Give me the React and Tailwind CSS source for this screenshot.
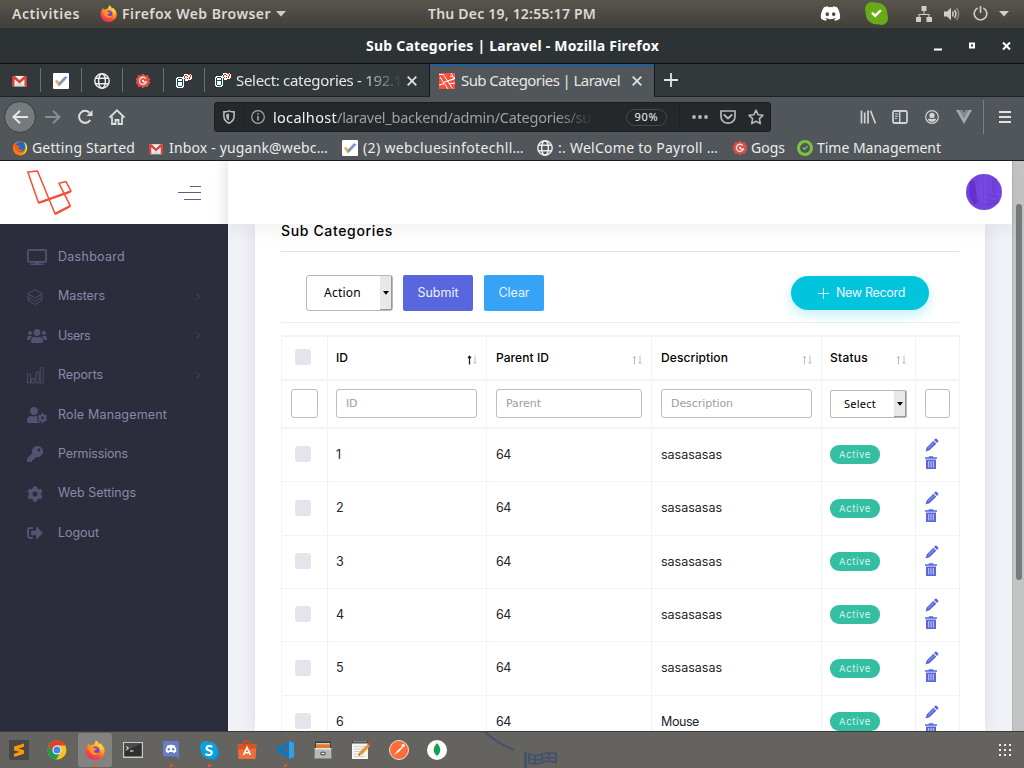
import React, { useLayoutEffect, useRef } from "react";
import { FaUsers, FaKey, FaCog, FaUserCog, FaSignOutAlt, FaDiscord } from "react-icons/fa";

/* Text run whose letter spacing is adjusted so that it spans `w` pixels. */
function Fit({ w, className = "", children }) {
  const ref = useRef(null);
  useLayoutEffect(() => {
    const el = ref.current;
    el.style.letterSpacing = "0px";
    const natural = el.getBoundingClientRect().width;
    el.style.letterSpacing = (w - natural) / children.length + "px";
  }, [w, children]);
  return (
    <span ref={ref} className={"inline-block shrink-0 whitespace-pre " + className}>
      {children}
    </span>
  );
}

const ubuntu = "font-['Noto_Sans',sans-serif]";
const poppins = "font-['Inter',sans-serif]";

function FirefoxIcon({ className = "" }) {
  return (
    <svg viewBox="0 0 20 20" className={"shrink-0 " + className}>
      <defs>
        <linearGradient id="ffx" x1="0.8" y1="0" x2="0.25" y2="1">
          <stop offset="0" stopColor="#fff04a" />
          <stop offset="0.4" stopColor="#ffa21e" />
          <stop offset="0.7" stopColor="#ff4a3a" />
          <stop offset="1" stopColor="#e62a7c" />
        </linearGradient>
      </defs>
      <path d="M2.200 6.200 3.400 3.600l1.400 2 2-1.200.2 1C8.500 5 10 3.500 10.800.4c2 1.200 3.200 2.700 3.500 4.400l.8-1.500c3 2 4.700 5 4.500 8.200-.4 5-4.600 8.500-9.600 8.500S.6 16.200.6 11c0-1.900.5-3.600 1.600-4.800z" fill="url(#ffx)" />
      <circle cx="10.400" cy="10.700" r="4.300" fill="#7a3fd6" />
      <path d="M3.500 7c2-1 4.600-.6 6 1.200l2.600.5c-.4 1.300-2 1.300-2.800 1.700-.5.800-.2 2 1.300 2.400 1.500.4 2.800-.4 3.800 0-1 1.800-4.200 3-6.800 1.600C5 13 3.500 10 3.500 7z" fill="#ff9420" />
      <path d="M12 4.500c2.800 1.500 4.300 4 3.800 7.500 2-3 1.500-6.500-.7-8.700l-.8 1.500z" fill="#ffd234" />
    </svg>
  );
}

function OldFirefoxIcon() {
  return (
    <svg viewBox="0 0 16 16" className="size-[16px] shrink-0">
      <circle cx="8" cy="8.300" r="7.100" fill="#ff7a12" />
      <circle cx="8.500" cy="6.600" r="5.200" fill="#1b6ad1" />
      <path d="M1 4c1.600.200 3 .200 4.300 1.400L8 6 6.600 8c.4 1.800 2.200 2 4 1.200-.3 2-3 3-5 2C3 10 2 8 2 6z" fill="#ff5a0c" />
      <path d="M12 2c2.500 1.500 3.500 4 3.200 6.500-.6 4-4 6.800-7.700 6.800 4-1 6.500-4 6-8C13.300 5.500 12.600 4 12 2z" fill="#ffd62e" />
    </svg>
  );
}

function Gmail({ className }) {
  return (
    <svg viewBox="0 0 16 13" className={"shrink-0 " + className}>
      <rect x="1" y="1" width="14" height="11.500" fill="#efefef" />
      <path d="m3 12 5-5 5 5z" fill="#d9d9d9" />
      <path d="M1 1h2l5 4.800L13 1h2a1 1 0 0 1 1 1v10.500h-2.600V4.600L8 9.200 2.600 4.600v7.900H0V2a1 1 0 0 1 1-1z" fill="#db4437" />
    </svg>
  );
}

function TickDoc() {
  return (
    <svg viewBox="0 0 16 16" className="size-[16px] shrink-0">
      <rect width="16" height="16" rx="1" fill="#fff" />
      <path d="m1.800 8.300 2-1.600 2.800 2.600-1 3.700z" fill="#f3a96a" />
      <path d="m5.800 9.800 6.200-6.600 2.600 1L6.600 13z" fill="#6d97d8" />
      <path d="M4.800 11.200 7 9.400l.8 1.800L6.200 13z" fill="#72b86a" />
      <path d="m8.200 7.200 1.300-1.400 1.800 1.800-1.600 1.800z" fill="#b88aa8" />
    </svg>
  );
}

function Globe() {
  return (
    <svg viewBox="0 0 16 16" className="size-[16px] shrink-0" fill="none" stroke="#ececec" strokeWidth="1.500">
      <circle cx="8" cy="8" r="7.200" />
      <ellipse cx="8" cy="8" rx="3.400" ry="7.200" />
      <path d="M1.500 5.300h13M1.500 10.700h13" />
    </svg>
  );
}

function Gogs() {
  return (
    <svg viewBox="0 0 16 16" className="size-[16px] shrink-0">
      <path d="m8 .5 2.200 2 2.800-.6.6 2.900 1.900 1.200L14.300 8l1.200 2-1.900 1.300-.6 2.800-2.800-.6L8 15.500l-2.200-2-2.800.6-.6-2.800L.5 10 1.700 8 .5 6l1.900-1.200L3 1.900l2.800.6z" fill="#dc5046" />
      <path d="M10.800 5.600A3.600 3.600 0 1 0 11.400 9H8.200" fill="none" stroke="#f6dedc" strokeWidth="1.300" />
      <circle cx="8" cy="7.800" r="1" fill="#fff" />
    </svg>
  );
}

function Adminer() {
  return (
    <svg viewBox="0 0 16 16" className="size-[16px] shrink-0" shapeRendering="crispEdges">
      <path d="M1 4h6v1h1v9H7v1H1v-1H0V5h1zM8 1h7v1h1v4h-1v1h-3v1H9V6H7V3h1z" fill="#fff" />
      <path d="M2 5h4v1H2zM1 6h1v7H1zM6 6h1v7H6zM2 8h4v1H2zM2 13h4v1H2z" fill="#0d4a5c" />
      <path d="M9 2h2v1H9zM12 1h2v1h-2zM8 3h1v2H8zM11 3h1v1h-1zM14 2h1v2h-1zM9 5h1v1H9zM11 5h1v1h-1zM13 4h1v2h-1z" fill="#e8231c" />
    </svg>
  );
}

function CloseX() {
  return (
    <svg viewBox="0 0 10 10" className="size-[10px] shrink-0" stroke="#e4e4e4" strokeWidth="1.700">
      <path d="m.7.7 8.600 8.600M9.300.7.7 9.300" />
    </svg>
  );
}

function TopBar() {
  return (
    <div className={"flex h-[28px] shrink-0 items-center bg-gradient-to-b from-[#58554d] to-[#413f39] pb-px text-[14px] leading-none font-semibold text-[#dcdad5] " + ubuntu}>
      <Fit w={68} className="ml-[12px]">Activities</Fit>
      <FirefoxIcon className="ml-[20px] size-[17px]" />
      <Fit w={149} className="ml-[5px]">Firefox Web Browser</Fit>
      <svg viewBox="0 0 10 6" className="ml-[5px] h-[6px] w-[10px]"><path d="M0 0h10L5 5.500z" fill="#d0cec8" /></svg>
      <Fit w={168} className="ml-[142px]">Thu Dec 19, 12:55:17 PM</Fit>
      <FaDiscord className="ml-[224px] size-[21px] shrink-0 text-white" />
      <svg viewBox="0 0 22 22" className="ml-[24px] size-[23px] shrink-0">
        <path d="M0 6.500A6.500 6.500 0 0 1 6.500 0c2 0 2.600.8 4.500.8 6 0 10.500 4.600 10.300 10.300.3 1.400.7 3 .7 4.400a6.500 6.500 0 0 1-6.500 6.500c-1.500 0-3-.6-4.300-.6C5.500 21.400.700 17 .7 11 .7 9.400 0 8.500 0 6.500z" fill="#68ab18" />
        <path d="m7.300 10.800 2.500 2.400 4.700-4.700" fill="none" stroke="#fff" strokeWidth="2.300" strokeLinecap="round" />
      </svg>
      <svg viewBox="0 0 16 16" className="ml-[28px] size-[16px] shrink-0" fill="#d0cec8">
        <path d="M5.500 0h5v5h-5zM0 11h5v5H0zM10.500 11H16v5h-5.500zM7.500 5h1v3h5v3h-1V9h-9v2h-1V8h5z" />
      </svg>
      <svg viewBox="0 0 16 14" className="ml-[12px] h-[14px] w-[16px] shrink-0" fill="none" stroke="#d0cec8" strokeWidth="1.500">
        <path d="M0 4.500h3L7 .8v12.400L3 9.500H0z" fill="#d0cec8" stroke="none" />
        <path d="M8.500 4.500q1.500 2.500 0 5" />
        <path d="M10.500 2.800q2.800 4.200 0 8.400" />
        <path d="M12.700 1q3.800 6 0 12" stroke="#8b8982" />
      </svg>
      <svg viewBox="0 0 16 16" className="ml-[13px] size-[15px] shrink-0" fill="none" stroke="#d0cec8" strokeWidth="1.700">
        <path d="M5 2.200a6.700 6.700 0 1 0 6 0M8 0v7.500" />
      </svg>
      <svg viewBox="0 0 10 6" className="ml-[11px] h-[6px] w-[10px] shrink-0"><path d="M0 0h10L5 5.500z" fill="#d0cec8" /></svg>
    </div>
  );
}

function TitleBar() {
  return (
    <div className={"flex h-[36px] shrink-0 items-center border-b border-[#0e1011] bg-[#2d3235] text-[14px] leading-none font-bold text-white " + ubuntu}>
      <Fit w={293} className="ml-[366px]">Sub Categories | Laravel - Mozilla Firefox</Fit>
      <svg viewBox="0 0 80 12" className="ml-[274px] h-[12px] w-[80px] shrink-0" fill="none" stroke="#fff" strokeWidth="2">
        <path d="M1 9.500h8" />
        <path d="M37 4h4v4h-4z" transform="translate(0 -.500)" />
        <path d="m70 2.500 7 7M77 2.500l-7 7" />
      </svg>
    </div>
  );
}

function PinnedTab({ children }) {
  return (
    <div className="flex w-[41px] shrink-0 items-center justify-center pr-[2px] pt-px">
      {children}
    </div>
  );
}

function TabBar() {
  const sep = <div className="-ml-px h-[24px] w-px shrink-0 self-center bg-[#6b7073]" />;
  return (
    <div className={"flex h-[33px] shrink-0 border-b border-[#1f2224] bg-[#33383b] text-[15px] leading-none text-[#e6e6e6] " + ubuntu}>
      <PinnedTab><Gmail className="h-[12px] w-[15px]" /></PinnedTab>{sep}
      <PinnedTab><TickDoc /></PinnedTab>{sep}
      <PinnedTab><Globe /></PinnedTab>{sep}
      <PinnedTab><Gogs /></PinnedTab>{sep}
      <PinnedTab><Adminer /></PinnedTab>{sep}
      <div className="flex w-[225px] shrink-0 items-center border-r border-[#16191a] pl-[10px]">
        <Adminer />
        <div className="ml-[5px] flex h-full w-[166px] items-center overflow-hidden [mask-image:linear-gradient(to_right,black_125px,transparent_166px)]">
          <Fit w={166}>Select: categories - 192.1</Fit>
        </div>
        <div className="mt-px ml-[5px]"><CloseX /></div>
      </div>
      <div className="-mb-px flex w-[224px] shrink-0 items-center border-t-2 border-[#215d9c] bg-[#50565a] pb-[2px] pl-[9px]">
        <svg viewBox="0 0 16 16" className="mt-px size-[16px] shrink-0">
          <rect width="16" height="16" fill="#fb503b" />
          <path d="M0 1.500h4.500L8.500 8l7.500-2.500M1 4l3.500 5.500L16 5.500M0 12l5.500-1.500 3.500 5.500M8.500 8l5 7.500M11 3l5 1.500M12 0l2 3M10 11l6-1" fill="none" stroke="#fff" strokeWidth="1" />
        </svg>
        <Fit w={159} className="ml-[6px]">Sub Categories | Laravel</Fit>
        <div className="mt-px ml-[12px]"><CloseX /></div>
      </div>
      <div className="flex items-center border-l border-[#16191a] pl-[9px]">
        <svg viewBox="0 0 14 14" className="size-[14px]" stroke="#e4e4e4" strokeWidth="1.800"><path d="M7 0v14M0 7h14" /></svg>
      </div>
    </div>
  );
}

function NavBar() {
  return (
    <div className={"flex h-[40px] shrink-0 items-center bg-[#50565a] text-[14.500px] leading-none text-[#9da0a2] " + ubuntu}>
      <div className="ml-[4px] flex size-[32px] shrink-0 items-center justify-center rounded-full border border-[#383d40] bg-[#767b7d]">
        <svg viewBox="0 0 16 14" className="h-[14px] w-[16px]" fill="none" stroke="#e6e6e6" strokeWidth="2"><path d="M16 7H1.500M8 .8 1.500 7 8 13.200" /></svg>
      </div>
      <svg viewBox="0 0 16 14" className="ml-[9px] h-[14px] w-[16px] shrink-0" fill="none" stroke="#888d8f" strokeWidth="2"><path d="M0 7h14.500M8 .8 14.500 7 8 13.200" /></svg>
      <svg viewBox="0 0 16 16" className="ml-[16px] size-[16px] shrink-0" fill="none" stroke="#dcdedf" strokeWidth="2">
        <path d="M13.200 11a6 6 0 1 1-.7-7.200" /><path d="M15.500 1v6h-6z" fill="#dcdedf" stroke="none" />
      </svg>
      <svg viewBox="0 0 16 16" className="ml-[16px] size-[16px] shrink-0" fill="none" stroke="#dcdedf" strokeWidth="1.800">
        <path d="M.5 8.500 8 1.300l7.500 7.200" /><path d="M3 7.500v7.500h3.500v-4h3v4H13V7.500" />
      </svg>
      <div className="ml-[89px] flex h-[30px] w-[557px] shrink-0 items-center rounded-[3px] border border-[#1b1e20] bg-[#25282b]">
        <svg viewBox="0 0 12 14" className="ml-[8px] h-[14px] w-[12px] shrink-0" fill="none" stroke="#b6b8b9" strokeWidth="1.600">
          <path d="M.9 1.800Q3.700 2 6 .9 8.300 2 11.100 1.800V6c0 4-2.500 6-5.100 7.200C3.400 12 .9 10 .9 6z" /><path d="M6 3.500v7c-2-1-2.800-2.500-2.800-4.500V4.200z" fill="#b6b8b9" stroke="none" />
        </svg>
        <div className="ml-[8px] h-[22px] w-px bg-[#1c1f21]" />
        <svg viewBox="0 0 14 14" className="ml-[7px] size-[14px] shrink-0" fill="none" stroke="#a4a7a9" strokeWidth="1.200"><circle cx="7" cy="7" r="6.300" /><path d="M7 6v4.500M7 3.300v1.500" strokeWidth="1.600" /></svg>
        <div className="ml-[8px] flex h-full w-[320px] items-center overflow-hidden [mask-image:linear-gradient(to_right,black_285px,transparent_320px)]">
          <Fit w={64} className="text-[#f2f2f2]">localhost</Fit>
          <Fit w={254}>/laravel_backend/admin/Categories/su</Fit>
        </div>
        <div className="ml-[33px] flex h-[17px] w-[41px] shrink-0 items-center justify-center rounded-full border border-[#45494c] pb-px text-[11px] text-[#eee]"><Fit w={24}>90%</Fit></div>
        <div className="ml-[12px] h-[22px] w-px bg-[#1c1f21]" />
        <svg viewBox="0 0 16 4" className="ml-[12px] h-[4px] w-[16px] shrink-0" fill="#b6b8b9"><circle cx="2" cy="2" r="1.900" /><circle cx="8" cy="2" r="1.900" /><circle cx="14" cy="2" r="1.900" /></svg>
        <svg viewBox="0 0 16 14" className="ml-[12px] h-[14px] w-[16px] shrink-0" fill="none" stroke="#b6b8b9" strokeWidth="1.700">
          <path d="M1 1h14v5.500c0 4-3.200 6.600-7 6.600s-7-2.600-7-6.600z" /><path d="M4.300 5 8 8.500 11.700 5" strokeWidth="1.900" strokeLinecap="round" />
        </svg>
        <svg viewBox="0 0 16 16" className="ml-[12px] size-[16px] shrink-0" fill="none" stroke="#b6b8b9" strokeWidth="1.600" strokeLinejoin="round">
          <path d="m8 1.200 2.100 4.500 4.900.6-3.600 3.400.9 4.900L8 12.200l-4.300 2.400.9-4.900L1 6.300l4.900-.6z" />
        </svg>
      </div>
      <svg viewBox="0 0 16 14" className="ml-[89px] h-[14px] w-[16px] shrink-0" stroke="#d0d2d3" strokeWidth="1.700"><path d="M1.500 .5v13M4.700 2.500v11M8 .5v13M10.500 .8l5 12.700" /></svg>
      <svg viewBox="0 0 16 14" className="ml-[16px] h-[14px] w-[16px] shrink-0" fill="none" stroke="#d0d2d3"><rect x="1" y="1" width="14" height="12" rx="1.500" strokeWidth="1.800" /><path d="M7.700 1v12" strokeWidth="1.500" /><path d="M3 4h3M3 6.300h3M3 8.500h2" strokeWidth="1.100" /></svg>
      <svg viewBox="0 0 14 14" className="ml-[17px] size-[14px] shrink-0"><circle cx="7" cy="7" r="6.300" fill="none" stroke="#d0d2d3" strokeWidth="1.200" /><circle cx="7" cy="5.400" r="2.700" fill="#d0d2d3" /><path d="M2.800 9.300c1.300-1 2-.9 2.700-.5.800.4 2.200.4 3 0 .7-.4 1.400-.5 2.700.5C10.300 11.200 8.800 12 7 12s-3.300-.8-4.200-2.700z" fill="#d0d2d3" /></svg>
      <svg viewBox="0 0 16 14" className="ml-[17px] h-[14px] w-[16px] shrink-0"><path d="M0 0h3.500L8 8l4.500-8H16L8 14z" fill="#a6a9ab" /><path d="M3.500 0h3L8 2.800 9.500 0h3L8 8z" fill="#858a8c" /></svg>
      <div className="ml-[11px] h-[34px] w-px shrink-0 bg-[#7b8082]" />
      <svg viewBox="0 0 12 12" className="ml-[15px] size-[12px] shrink-0" stroke="#e2e2e2" strokeWidth="2"><path d="M0 1h12M0 6h12M0 11h12" /></svg>
    </div>
  );
}

function Bookmarks() {
  return (
    <div className={"flex h-[24px] shrink-0 items-center border-b border-[#17191a] bg-[#50565a] pb-px pl-[12px] text-[14px] leading-none text-[#ececec] " + ubuntu}>
      <OldFirefoxIcon />
      <Fit w={103} className="ml-[4px]">Getting Started</Fit>
      <Gmail className="mt-px ml-[14px] h-[12px] w-[14px]" />
      <Fit w={159} className="ml-[6px]">Inbox - yugank@webc…</Fit>
      <div className="ml-[14px]"><TickDoc /></div>
      <Fit w={161} className="ml-[5px]">(2) webcluesinfotechll…</Fit>
      <div className="ml-[13px]"><Globe /></div>
      <Fit w={160} className="ml-[5px]">:. WelCome to Payroll …</Fit>
      <div className="ml-[14px]"><Gogs /></div>
      <Fit w={34} className="ml-[3px]">Gogs</Fit>
      <svg viewBox="0 0 16 16" className="ml-[12px] size-[16px] shrink-0" fill="none"><circle cx="8" cy="8" r="6.500" stroke="#7cc242" strokeWidth="3" /><path d="m5.700 7.600 1.800 1.600 3-2.900" stroke="#7cc242" strokeWidth="1.400" /></svg>
      <Fit w={124} className="ml-[4px]">Time Management</Fit>
    </div>
  );
}

const MonitorIcon = () => (
  <svg viewBox="0 0 20 16" className="h-[16px] w-[20px]" fill="none" stroke="#505472" strokeWidth="1.800"><rect x=".9" y=".9" width="18.200" height="12" rx="1.200" /><path d="M3.500 15.200h13M8 14h4" strokeWidth="1.600" /></svg>
);
const LayersIcon = () => (
  <svg viewBox="0 0 16 16" className="size-[16px]" fill="none" stroke="#505472" strokeWidth=".8"><path d="m.5 4.800 7.500-4.300 7.500 4.300L8 9z" /><path d="m2.800 6.300-2.300 1.500L8 12.200l7.500-4.400-2.300-1.500M2.800 9.600.5 11 8 15.500l7.500-4.500-2.300-1.400" /></svg>
);
const BarsIcon = () => (
  <svg viewBox="0 0 17 17" className="size-[17px]" fill="none" stroke="#505472" strokeWidth=".8"><path d="M.5 7h3v9h-3zM4.700 11.500h3V16h-3zM9 5h3v11H9zM13.200.8h3V16h-3z" /></svg>
);

const menu = [
  { label: "Dashboard", w: 67, icon: <MonitorIcon /> },
  { label: "Masters", w: 47, icon: <LayersIcon />, more: true },
  { label: "Users", w: 32, icon: <FaUsers className="size-[20px]" />, more: true },
  { label: "Reports", w: 45, icon: <BarsIcon />, more: true },
  { label: "Role Management", w: 109, icon: <FaUserCog className="size-[20px]" /> },
  { label: "Permissions", w: 70, icon: <FaKey className="size-[16px]" /> },
  { label: "Web Settings", w: 78, icon: <FaCog className="size-[16px]" /> },
  { label: "Logout", w: 41, icon: <FaSignOutAlt className="size-[16px]" /> },
];

function Sidebar() {
  return (
    <aside className="flex w-[228px] shrink-0 flex-col bg-[#2c2d3c]">
      <div className="flex h-[63px] shrink-0 items-start bg-white bg-gradient-to-r from-white from-95% to-[#f3f3f4]">
        <svg viewBox="0 0 46 46" className="mt-[9px] ml-[27px] size-[46px] shrink-0" fill="none" stroke="#fb4b36" strokeWidth="1.500" strokeLinejoin="round">
          <path d="M.8 2 10.500 1 28 43.800 43.300 35.800 32 13.300l7-1.700 5 9.500L11.500 32.800z" />
          <path d="m12 32.800 31.500-11.200M28 44l15-7.700" strokeWidth="2.200" />
        </svg>
        <svg viewBox="0 0 23 15" className="mt-[24px] ml-[105px] h-[15px] w-[23px] shrink-0" stroke="#5a5e80" strokeWidth="1"><path d="M12 1.500h11M0 7.500h23M6 14.500h17" /></svg>
      </div>
      <nav className={"flex flex-col pt-[13.500px] text-[12.500px] leading-none text-[#868aa8] " + poppins}>
        {menu.map((m) => (
          <div key={m.label} className="flex h-[39.400px] items-center pl-[27px]">
            <span className="flex w-[31px] shrink-0 text-[#505472]">{m.icon}</span>
            <Fit w={m.w}>{m.label}</Fit>
            {m.more && (
              <svg viewBox="0 0 4 8" className="mr-[28px] ml-auto h-[7px] w-[4px]" fill="none" stroke="#505472" strokeWidth=".9"><path d="m.5.5 3 3.500-3 3.500" /></svg>
            )}
          </div>
        ))}
      </nav>
    </aside>
  );
}

function SortArrows({ active }) {
  return (
    <svg viewBox="0 0 10 10" className="h-[10px] w-[10px] shrink-0" fill="none" strokeWidth="1">
      <path d="M2.500 9.500V1.500M1 3 2.500 1.300 4 3" stroke={active ? "#222" : "#bcbec6"} strokeWidth={active ? 1.300 : 1} />
      <path d="M8 .5v8M6.500 7 8 8.700 9.500 7" stroke="#bcbec6" />
    </svg>
  );
}

const cols = "grid grid-cols-[46px_159px_165px_170px_94px_44px]";
const cell = "border-r border-[#f2f3f8]";

function HeadCell({ label, w, active, pad = "pl-[8px]" }) {
  return (
    <div className={"flex items-center justify-between pr-[9px] " + pad + " " + cell}>
      <Fit w={w}>{label}</Fit>
      <div className="mt-[4px]"><SortArrows active={active} /></div>
    </div>
  );
}

const Check = () => <div className="size-[16px] rounded-[3px] bg-[#e2e5ec]" />;

function FilterInput({ label, w, pad = "pl-[9px]" }) {
  return (
    <div className={"pt-[8px] pr-[9px] " + pad + " " + cell}>
      <div className="flex h-[29px] items-center rounded-[3px] border border-[#bdbdbd] bg-white pl-[9px]">
        {label && <Fit w={w}>{label}</Fit>}
      </div>
    </div>
  );
}

function SelectArrow() {
  return (
    <div className="ml-auto flex h-full w-[12px] shrink-0 items-center justify-center border-r border-b border-[#9a9a9a] bg-[#e8e8e7]">
      <svg viewBox="0 0 6 4" className="h-[4px] w-[6px]"><path d="M0 0h6L3 3.800z" /></svg>
    </div>
  );
}

const rows = [
  { id: "1", name: "sasasasas", w: 61, h: "h-[53px]", check: "pt-[17px]" },
  { id: "2", name: "sasasasas", w: 61, h: "h-[54px]", check: "pt-[18px]" },
  { id: "3", name: "sasasasas", w: 61, h: "h-[53px]", check: "pt-[17px]" },
  { id: "4", name: "sasasasas", w: 61, h: "h-[53px]", check: "pt-[17px]" },
  { id: "5", name: "sasasasas", w: 61, h: "h-[54px]", check: "pt-[18px]" },
  { id: "6", name: "Mouse", w: 38, h: "h-[53px]", check: "pt-[17px]" },
];

function Row({ r }) {
  return (
    <div className={cols + " shrink-0 border-b border-[#f2f3f8] text-[12.500px] leading-none text-[#212529] " + r.h}>
      <div className={"pl-[13px] " + r.check + " " + cell}><Check /></div>
      <div className={"flex items-center pl-[8px] " + cell}><Fit w={r.id === "1" ? 5 : 7}>{r.id}</Fit></div>
      <div className={"flex items-center pl-[9px] " + cell}><Fit w={15}>64</Fit></div>
      <div className={"flex items-center pl-[9px] " + cell}><Fit w={r.w}>{r.name}</Fit></div>
      <div className={"flex items-center pb-px pl-[8px] " + cell}>
        <div className="flex h-[19px] w-[50px] items-center justify-center rounded-[9px] bg-[#34bfa3] pt-px text-[9.500px] text-[#d2f3eb]"><Fit w={32}>Active</Fit></div>
      </div>
      <div className={"flex flex-col gap-[4px] pt-[9px] pl-[9px] " + cell}>
        <svg viewBox="0 0 14 14" className="size-[14px] shrink-0" fill="#5867dd"><path d="M10.200.8a1 1 0 0 1 1.400 0l1.600 1.600a1 1 0 0 1 0 1.400L12 5 9 2zM8.300 2.700l3 3-6.800 6.500L.5 13.500 1.700 9.500z" /><path d="m3.200 10.300 6-5.800" stroke="#b9bff2" strokeWidth=".7" /></svg>
        <svg viewBox="0 0 12 13" className="h-[13px] w-[12px] shrink-0" fill="#5867dd"><path d="M0 1.300h3.500L4 .3h4l.5 1H12v1.500H0zM1 3.500h10V13H1z" /><path d="M3.700 5v6.500M6 5v6.500M8.300 5v6.500" stroke="#d5d9f8" strokeWidth=".9" /></svg>
      </div>
    </div>
  );
}

function Page() {
  return (
    <main className={"flex min-w-0 flex-1 flex-col bg-[#f1f2f7] " + poppins}>
      <header className="relative z-10 flex h-[63px] shrink-0 items-center justify-end bg-white pr-[10px] pb-[2px] shadow-[0_5px_18px_rgba(69,65,78,0.08)]">
        <svg viewBox="0 0 36 36" className="size-[36px]">
          <defs><clipPath id="avatar"><circle cx="18" cy="18" r="18" /></clipPath></defs>
          <g clipPath="url(#avatar)">
            <rect width="36" height="36" fill="#7444de" />
            <path d="M4 8 8.500 6.500l3 21.500-3 3L3 22z" fill="#6432c8" />
            <path d="M15 4v24M19 0v30" stroke="#7a4ee2" strokeWidth="1.200" />
            <path d="M27 4v12q0 3 2 2l1-6V4M23 21l8 2v5l-8-2zM20 31l14-3" fill="none" stroke="#6b3cd2" strokeWidth="1.300" />
          </g>
        </svg>
      </header>
      <section className="mx-[27px] flex min-h-0 flex-1 flex-col bg-white px-[26px] shadow-[0_0_15px_rgba(69,65,78,0.12)]">
        <div className="flex h-[28px] shrink-0 items-start border-b border-[#e2e3e8] text-[14px] leading-[13px] font-medium text-black">
          <Fit w={112}>Sub Categories</Fit>
        </div>
        <div className="flex h-[71px] shrink-0 items-start border-b border-[#ebedf2] pt-[23px] pr-[30px] pl-[25px] text-[12.500px] leading-none text-[#f0f1fd]">
          <div className="flex h-[36px] w-[87px] items-center rounded-[3px] border border-[#b7b7b7] pl-[17px] font-['Noto_Sans',sans-serif] text-[12px] text-black"><Fit w={37}>Action</Fit><SelectArrow /></div>
          <div className="ml-[10px] flex h-[36px] w-[70px] items-center justify-center rounded-[2px] bg-[#5867dd]"><Fit w={41}>Submit</Fit></div>
          <div className="ml-[11px] flex h-[36px] w-[60px] items-center justify-center rounded-[2px] bg-[#36a3f7]"><Fit w={31}>Clear</Fit></div>
          <div className="mt-px ml-auto flex h-[34px] w-[138px] items-center rounded-full bg-[#00c5dc] pl-[27px] shadow-[0_5px_10px_2px_rgba(0,197,220,0.19)]">
            <svg viewBox="0 0 11 11" className="size-[11px]" stroke="#d9f7fb" strokeWidth="1"><path d="M5.500 0v11M0 5.500h11" /></svg>
            <Fit w={69} className="ml-[7px]">New Record</Fit>
          </div>
        </div>
        <div className="mt-[12px] flex min-h-0 w-[679px] flex-1 flex-col overflow-hidden border-l border-[#f2f3f8]">
          <div className={cols + " h-[46px] shrink-0 border-y-2 border-[#f2f3f8] text-[12px] leading-none font-medium text-black"}>
            <div className={"pt-[12px] pl-[13px] " + cell}><Check /></div>
            <HeadCell label="ID" w={12} active />
            <HeadCell label="Parent ID" w={53} pad="pl-[9px]" />
            <HeadCell label="Description" w={67} pad="pl-[9px]" />
            <HeadCell label="Status" w={38} />
            <div className={cell} />
          </div>
          <div className={cols + " h-[48px] shrink-0 border-b-2 border-[#f2f3f8] font-['DejaVu_Sans',sans-serif] text-[11px] leading-none text-[#9a9ea6]"}>
            <FilterInput />
            <FilterInput label="ID" w={11} pad="pl-[8px]" />
            <FilterInput label="Parent" w={35} />
            <FilterInput label="Description" w={62} />
            <div className={"pt-[9px] pr-[8px] pl-[8px] " + cell}><div className="flex h-[28px] items-center rounded-[2px] border border-[#b7b7b7] pl-[13px] font-['Noto_Sans',sans-serif] text-black"><Fit w={32} className="-mt-[2px]">Select</Fit><SelectArrow /></div></div>
            <FilterInput />
          </div>
          {rows.map((r) => <Row key={r.id} r={r} />)}
        </div>
      </section>
    </main>
  );
}

function DockItem({ children, running, active }) {
  return (
    <div className="relative flex w-[38px] shrink-0 items-center justify-center">
      <div className={"flex size-[34px] items-center justify-center rounded-[3px] " + (active ? "bg-[#84827e]" : "")}>{children}</div>
      {running && <div className="absolute bottom-[1px] left-[17.500px] size-[3px] rounded-full bg-[#e95420]" />}
    </div>
  );
}

function Dock() {
  const s = "size-[20px]";
  return (
    <footer className="flex h-[37px] shrink-0 border-t border-[#3c3b38] bg-[#65635f]">
      <DockItem><svg viewBox="0 0 20 20" className={s}><rect width="20" height="20" rx="1" fill="#484848" /><path d="m5 6.500 10-3v3.200L9.500 8.500 15 10.300v3.500L5 17v-3.200l5.500-1.800L5 10.200z" fill="#ff9800" /></svg></DockItem>
      <DockItem><svg viewBox="0 0 20 20" className={s}><circle cx="10" cy="10" r="9.500" fill="#fbc116" /><path d="M10 10 1.500 5.700A9.500 9.500 0 0 0 9 19.500l4.500-7z" fill="#1b9c52" /><path d="M10 5.500h8.400A9.500 9.500 0 0 0 1.700 5.200L6 12.500z" fill="#e0412f" /><circle cx="10" cy="10" r="4.500" fill="#fff" /><circle cx="10" cy="10" r="3.500" fill="#4283f3" /></svg></DockItem>
      <DockItem active running><FirefoxIcon className={s} /></DockItem>
      <DockItem><svg viewBox="0 0 20 16" className="h-[16px] w-[20px]"><rect width="20" height="16" fill="#c9c9c9" /><rect x="1.200" y="1.200" width="17.600" height="13.300" fill="#2e302f" /><path d="M1.200 1.200h17.600L1.200 10z" fill="#4a4c4b" /><path d="m3.300 4.500 2.200 1.700-2.200 1.700M7 9h3.500" fill="none" stroke="#fff" /></svg></DockItem>
      <DockItem running><svg viewBox="0 0 16 18" className="h-[18px] w-[16px]"><path d="M1.500 0h13A1.500 1.500 0 0 1 16 1.500V18l-3-2.500H1.500A1.500 1.500 0 0 1 0 14V1.500A1.500 1.500 0 0 1 1.500 0z" fill="#687dc5" /><path d="M4.300 4.500Q8 3 11.700 4.500q1.800 3 1.600 6-1.800 1.500-3 1.500l-.6-1H6.300l-.6 1q-1.200 0-3-1.500-.2-3 1.600-6z" fill="#fff" /><circle cx="5.800" cy="8.300" r="1.200" fill="#687dc5" /><circle cx="10.200" cy="8.300" r="1.200" fill="#687dc5" /></svg></DockItem>
      <DockItem running>
        <div className="relative flex size-[19px] items-center justify-center font-['Lato',sans-serif] text-[15px] leading-none font-black text-white">
          <svg viewBox="0 0 19 19" className="absolute inset-0 size-[19px]"><circle cx="6" cy="6" r="6" fill="#0aa5df" /><circle cx="13" cy="13" r="6" fill="#0a8ec8" /><circle cx="9.500" cy="9.500" r="8.500" fill="#08a3df" /></svg>
          <span className="relative">S</span>
        </div>
      </DockItem>
      <DockItem>
        <svg viewBox="0 0 20 20" className={s}><path d="M.5 4.500h19L18.500 19h-17z" fill="#ee6e3a" /><path d="M1 4.500h18v4l-18 1z" fill="#df5024" /><path d="M7 5V3q0-2 3-2t3 2v2" fill="none" stroke="#d9461e" strokeWidth="2" /><path d="m6.500 15 3.500-7.500 3.500 7.500M7 12.700h6" fill="none" stroke="#fff" strokeWidth="1.600" /></svg>
      </DockItem>
      <DockItem running><svg viewBox="0 0 18 18" className="size-[18px]"><path d="M13 0 18 2v14l-5 2z" fill="#24a5ee" /><path d="M13 0v4.500L2.300 13.300.5 12v-1zM.5 5.500l1.800-1.200L13 13v5L.5 7z" fill="#0a77c4" /></svg></DockItem>
      <DockItem><svg viewBox="0 0 18 20" className="h-[20px] w-[18px]"><path d="M1 1.500h16v6.500H1z" fill="#3f3b38" /><path d="M2 4h14v4H2z" fill="#e07a32" /><path d="M2 3.200h14v1H2z" fill="#f4f0e4" /><path d="M.8 8h16.400l.3 10.500H.5z" fill="#b8b8b6" /><path d="M.8 8h16.400v1.500H.8z" fill="#e4e4e2" /><ellipse cx="9" cy="13.500" rx="3" ry="2" fill="#686866" /><path d="M7.500 13.500h3" stroke="#eee" /></svg></DockItem>
      <DockItem><svg viewBox="0 0 20 20" className={s}><path d="M1 1h16v18H1z" fill="#f5f5f2" /><path d="M1 1h16v2.500H1z" fill="#444" /><path d="M2.500 1.800h13" stroke="#eee" strokeDasharray="1 1" /><path d="M3 6.500h11M3 9h9M3 11.500h6M3 14h4M3 16.500h11" stroke="#c6c6c3" strokeWidth=".8" /><path d="m7.500 15.500 1-3.500L17 4l2 2-8 8.500z" fill="#f0932b" /><path d="m16.500 4.300 1.500-1.500 2 2-1.300 1.500z" fill="#d94a4a" /><path d="m7.500 15.500.5-1.700 1.200 1.200z" fill="#222" /></svg></DockItem>
      <DockItem><svg viewBox="0 0 20 20" className={s}><circle cx="10" cy="10" r="9.500" fill="#ff6c37" stroke="#fff" strokeWidth=".8" /><path d="m4.500 15.500 4.500-5.500 4.800-4 .7.700-4 4.500z" fill="#fff" /><circle cx="14.200" cy="5.600" r="1.700" fill="#fff" /></svg></DockItem>
      <DockItem><svg viewBox="0 0 20 20" className={s}><circle cx="10" cy="10" r="10" fill="#fff" /><path d="M10 3c2 2.500 3.300 4.500 3.300 7 0 2.800-1.500 4.300-3 5.500v1h-.6v-1c-1.500-1.200-3-2.700-3-5.500 0-2.500 1.300-4.500 3.300-7z" fill="#13a150" /></svg></DockItem>
      <svg viewBox="0 0 74 36" className="ml-[28px] h-[36px] w-[74px] shrink-0" fill="none" stroke="#42536a" strokeWidth="2">
        <path d="M1 0q12 11 29 18" />
        <path d="M41.500 20v16" strokeWidth="3" />
        <path d="M45 22q6 3 12 .5t15-1v9q-8-2.500-14 0t-13 .5zM45 26.500q6 3 12 .5t15-1M51 23.500v8M58 22.500v8M65 21.500v8" strokeWidth="1.800" />
      </svg>
      <svg viewBox="0 0 12 12" className="mt-[12px] mr-[13px] ml-auto size-[12px]" fill="#f0f0f0"><path d="M0 0h2v2H0zM5 0h2v2H5zM10 0h2v2h-2zM0 5h2v2H0zM5 5h2v2H5zM10 5h2v2h-2zM0 10h2v2H0zM5 10h2v2H5zM10 10h2v2h-2z" /></svg>
    </footer>
  );
}

export default function App() {
  return (
    <div className="flex h-[768px] w-[1024px] flex-col overflow-hidden">
      <TopBar />
      <TitleBar />
      <TabBar />
      <NavBar />
      <Bookmarks />
      <div className="flex h-[570px] shrink-0 overflow-hidden">
        <Sidebar />
        <Page />
        <div className="flex w-[12px] shrink-0 justify-center border-l border-[#b3b4b4] bg-[#c3c4c4] pt-[43px]">
          <div className="h-[376px] w-[6px] rounded-full bg-[#777a7b]" />
        </div>
      </div>
      <Dock />
    </div>
  );
}
